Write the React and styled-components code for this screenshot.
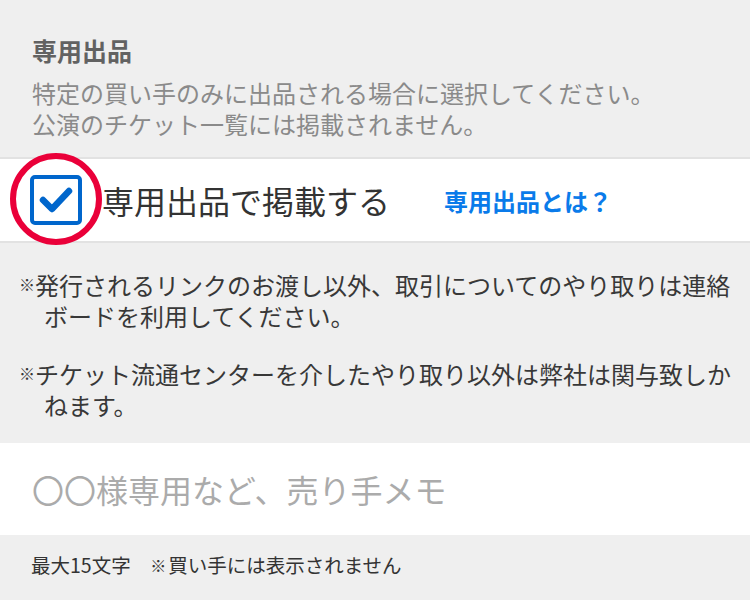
import React from 'react'
import styled, { createGlobalStyle } from 'styled-components'

const GlobalStyle = createGlobalStyle`
html, body {
  margin: 0;
  padding: 0;
  background: #efefef;
}
body {
  font-family: "Noto Sans CJK JP", "Noto Sans", sans-serif;
  -webkit-font-smoothing: antialiased;
}
`

const Page = styled.div`
width: 750px;
height: 600px;
overflow: hidden;
background: #efefef;
`

const Head = styled.div`
padding: 32px 32px 18px;
`

const Title = styled.h2`
margin: 0;
font-size: 25px;
line-height: 36px;
font-weight: 700;
color: #626262;
`

const Desc = styled.p`
margin: 9px 0 0;
font-size: 24px;
line-height: 31px;
color: #8a8a8a;
`

const CheckRow = styled.label`
display: flex;
align-items: center;
height: 82px;
background: #fff;
border-top: 2px solid #e2e2e2;
border-bottom: 2px solid #e2e2e2;
padding-left: 30px;
`

const BoxWrap = styled.span`
position: relative;
display: flex;
width: 52px;
height: 50px;
`

const Box = styled.span`
box-sizing: border-box;
width: 52px;
height: 50px;
border: 4px solid #0066cc;
border-radius: 5px;
display: flex;
align-items: center;
justify-content: center;
`

const Ring = styled.span`
position: absolute;
left: -20px;
top: -22px;
width: 80px;
height: 80px;
border: 6px solid #ea0039;
border-radius: 50%;
`

const Label = styled.span`
margin-left: 20px;
font-size: 32px;
color: #333;
`

const HelpLink = styled.a`
margin-left: 54px;
font-size: 24px;
font-weight: 700;
color: #0a7bea;
text-decoration: none;
`

const Notes = styled.div`
padding: 26px 10px 23px 0;
`

const Note = styled.p`
margin: ${p => (p.$first ? '0' : '27px')} 0 0;
padding-left: 44px;
text-indent: -24px;
font-size: 24px;
line-height: 31px;
color: #383838;
`

const Kome = styled.span`
display: inline-block;
vertical-align: top;
text-indent: 0;
white-space: nowrap;
width: ${p => p.$w}px;
font-size: ${p => p.$size}px;
margin-left: ${p => p.$shift || 0}px;
`

const Memo = styled.input`
display: block;
box-sizing: border-box;
width: 100%;
height: 92px;
margin: 0;
border: 0;
outline: none;
padding: 0 32px;
background: #fff;
font-family: inherit;
font-size: 32px;
color: #333;
&::placeholder {
  color: #ababab;
}
`

const Foot = styled.p`
margin: 0;
padding: 16px 31px 0;
font-size: 19.5px;
line-height: 28px;
color: #333;
`

function Check () {
  return (
    <svg width='34' height='28' viewBox='0 0 34 28'>
      <path d='M4 14 L13 23 L30 5' fill='none' stroke='#0066cc' strokeWidth='6.5' strokeLinecap='round' strokeLinejoin='round' />
    </svg>
  )
}

function App () {
  return (
    <Page>
      <GlobalStyle />
      <Head>
        <Title>専用出品</Title>
        <Desc>
          特定の買い手のみに出品される場合に選択してください。<br />
          公演のチケット一覧には掲載されません。
        </Desc>
      </Head>

      <CheckRow>
        <BoxWrap>
          <Box><Check /></Box>
          <Ring />
        </BoxWrap>
        <Label>専用出品で掲載する</Label>
        <HelpLink href='#'>専用出品とは？</HelpLink>
      </CheckRow>

      <Notes>
        <Note $first>
          <Kome $w={16} $size={16} $shift={-1}>※</Kome>発行されるリンクのお渡し以外、取引についてのやり取りは連絡ボードを利用してください。
        </Note>
        <Note>
          <Kome $w={16} $size={16} $shift={-1}>※</Kome>チケット流通センターを介したやり取り以外は弊社は関与致しかねます。
        </Note>
      </Notes>

      <Memo type='text' placeholder='〇〇様専用など、売り手メモ' />

      <Foot>
        最大15文字　<Kome $w={18} $size={16}>※</Kome>買い手には表示されません
      </Foot>
    </Page>
  )
}

export default App
